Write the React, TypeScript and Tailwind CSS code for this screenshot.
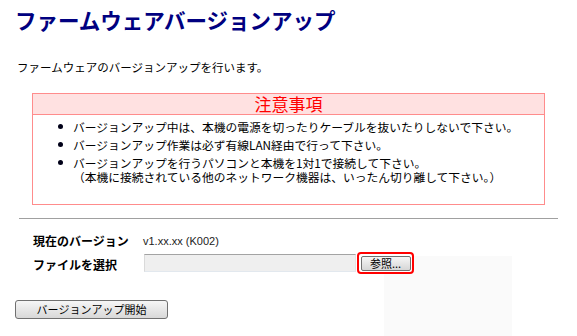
import React from "react";

const jp = { fontFamily: '"Noto Sans CJK JP", "Noto Sans", sans-serif' };

export default function App() {
  return (
    <div className="relative w-[577px] h-[336px] bg-white overflow-hidden text-black" style={jp}>
      <div className="absolute left-[384px] top-[256px] w-[128px] h-[80px] bg-[#fafafa]" />
      <div className="relative">
        <h1 className="pl-[15px] pt-[6px] text-[21.5px] leading-[28px] font-bold text-[#000080]">
          ファームウェアバージョンアップ
        </h1>
        <p className="mt-[25px] pl-[17px] text-[11.5px] leading-[16px]">
          ファームウェアのバージョンアップを行います。
        </p>

        <div className="mt-[18px] ml-[32px] w-[513px] h-[112px] border border-[#ff8c8c] flex flex-col">
          <div className="h-[21px] bg-[#ffe1e1] border-b border-[#ff8c8c] text-center text-[17px] leading-[20px] text-[#ff0000]">
            注意事項
          </div>
          <ul className="pt-[5px] pl-[25px] flex flex-col gap-[4px] text-[11.75px] leading-[14px]">
            <li className="flex">
              <span className="mt-[4px] w-[5px] h-[5px] rounded-full bg-[#000018] shrink-0" />
              <span className="ml-[10px]">バージョンアップ中は、本機の電源を切ったりケーブルを抜いたりしないで下さい。</span>
            </li>
            <li className="flex">
              <span className="mt-[4px] w-[5px] h-[5px] rounded-full bg-[#000018] shrink-0" />
              <span className="ml-[10px]">バージョンアップ作業は必ず有線LAN経由で行って下さい。</span>
            </li>
            <li className="flex">
              <span className="mt-[4px] w-[5px] h-[5px] rounded-full bg-[#000018] shrink-0" />
              <span className="ml-[10px]">
                バージョンアップを行うパソコンと本機を1対1で接続して下さい。
                <br />
                （本機に接続されている他のネットワーク機器は、いったん切り離して下さい。）
              </span>
            </li>
          </ul>
        </div>

        <div className="mt-[13px] ml-[19px] w-[539px] h-px bg-[#a0a0a0]" />

        <div className="mt-[14px] ml-[33px] flex items-center h-[16px]">
          <div className="w-[110px] text-[12px] leading-[16px] font-bold">現在のバージョン</div>
          <div
            className="text-[11px] leading-[16px] text-[#222]"
            style={{ fontFamily: '"Liberation Sans", Arial, sans-serif' }}
          >
            v1.xx.xx (K002)
          </div>
        </div>

        <div className="relative z-10 mt-[3px] ml-[33px] flex items-center h-[22px]">
          <div className="w-[111px] text-[12px] leading-[16px] font-bold pt-[3px]">ファイルを選択</div>
          <div className="w-[212px] h-[18px] bg-[#efefef] border-t border-t-[#a3a3a3] border-l border-l-[#dadada] border-r border-r-[#e4e4e4] border-b border-b-[#e2e8ee]" />
          <div className="ml-px w-[57px] h-[22px] rounded-[4px] border-2 border-[#ff0000] bg-white flex items-center justify-center">
            <div className="w-[50px] h-[15px] rounded-[2px] border border-[#707070] bg-gradient-to-b from-[#f6f6f6] to-[#d6d6d6] flex items-center justify-center text-[11px] leading-[13px]">
              参照...
            </div>
          </div>
        </div>

        <div className="mt-[26px] ml-[15px]">
          <button className="w-[153px] h-[19px] rounded-[3px] border border-[#707070] bg-gradient-to-b from-[#f6f6f6] to-[#d8d8d8] flex items-center justify-center text-[11px] leading-[13px]" style={jp}>
            バージョンアップ開始
          </button>
        </div>
      </div>
    </div>
  );
}
